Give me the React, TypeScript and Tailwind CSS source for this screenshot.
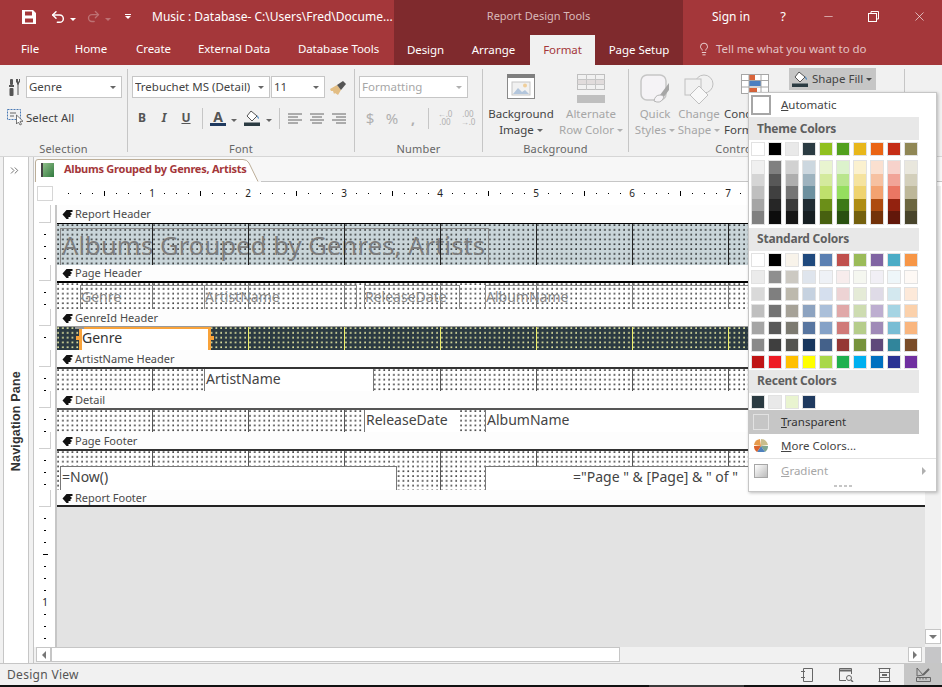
import React from "react";
import { Undo2, Redo2, X, Minus, Lightbulb, ChevronsRight } from "lucide-react";

const GRID = [95, 191, 287, 383, 479, 575, 671, 767, 863];
const DOTS_DARK = "bg-[radial-gradient(circle_at_1px_1px,#000_0.55px,transparent_0.85px)] bg-[length:4.8px_4.8px]";
const DOTS_YELLOW = "bg-[radial-gradient(circle_at_1px_1px,#ffffb0_0.6px,transparent_0.85px)] bg-[length:4.8px_4.8px]";

const THEME = ["#ffffff", "#000000", "#e9e9e9", "#2b3b42", "#90c01f", "#52a01e", "#e8b71b", "#ea6414", "#c52d16", "#908755"];
const SHADES = [
  ["#f0f0f0", "#d5d5d5", "#bfbfbf", "#a5a5a5", "#808080"],
  ["#808080", "#585858", "#404040", "#262626", "#0d0d0d"],
  ["#d1d1d1", "#aeaeae", "#757575", "#3a3a3a", "#171717"],
  ["#ccd7df", "#9eb3bf", "#6d909f", "#212d34", "#161e22"],
  ["#e9f4d0", "#d4ea9d", "#bfe06c", "#6b8f18", "#476010"],
  ["#dcf2cc", "#b9e58d", "#95de5f", "#3d7917", "#295010"],
  ["#fbf1cf", "#f5e39f", "#efd36f", "#ae8c13", "#74600d"],
  ["#fae0d0", "#f6c1a1", "#f3a270", "#ad4b10", "#73320a"],
  ["#f7d2cb", "#f1a498", "#ea7663", "#93220f", "#62170a"],
  ["#e9e7dd", "#d3cfbb", "#bdb799", "#6c6640", "#48442b"],
];
const STANDARD = [
  ["#ffffff", "#000000", "#f8f3ea", "#1f497d", "#5b80b2", "#c0504d", "#9bbb59", "#8064a2", "#4bacc6", "#f79646"],
  ["#ebebeb", "#8f8f8f", "#ccc9c2", "#dfe5ed", "#eef1f6", "#f7ecec", "#f5f7f0", "#f1eff5", "#eef6f9", "#fef9f5"],
  ["#d9d9d9", "#7f7f7f", "#bdb9ad", "#c6d2e0", "#d5dfee", "#edd3d4", "#e5ebd7", "#dfdbe7", "#d3e8ef", "#fde9d9"],
  ["#bfbfbf", "#737373", "#a6a298", "#8da3c0", "#aabfd9", "#e0a8a8", "#cedcb1", "#bdaed0", "#a5d4e3", "#fbd1ab"],
  ["#a5a5a5", "#595959", "#7c7a71", "#5876a0", "#85a2c7", "#d07a78", "#b6cd8b", "#9f8ab7", "#79bdd4", "#f9b67f"],
  ["#8a8a8a", "#3f3f3f", "#545450", "#17365d", "#44618a", "#953735", "#76923c", "#5f497a", "#31859b", "#7a4c28"],
  ["#bf1515", "#ee1c25", "#ffc000", "#ffff00", "#a9d84a", "#1eb04f", "#00b0f0", "#0070c0", "#2a3293", "#7030a0"],
];
const RECENT = ["#2b3b42", "#e9e9e9", "#e9f4d0", "#1f3a5f"];

function Swatch({ c }: { c: string }) {
  return <div className="w-[12px] h-[12px] border border-[#e2e2e2] box-content shrink-0" style={{ backgroundColor: c }} />;
}
function SwatchRow({ colors }: { colors: string[] }) {
  return (
    <div className="flex gap-[3px] pl-[2px]">
      {colors.map((c, i) => <Swatch key={i} c={c} />)}
    </div>
  );
}
function MenuHead({ children }: { children: React.ReactNode }) {
  return (
    <div className="h-[23px] w-[170px] bg-[#e8e8e8] flex items-center pl-[8px] text-[12px] font-bold text-[#5f5f5f] tracking-[-0.2px]">
      {children}
    </div>
  );
}
function ShapeMenu() {
  return (
    <div className="absolute left-[748px] top-[92px] w-[189px] h-[400px] bg-white border border-[#c6c6c6] shadow-[1px_1px_3px_rgba(0,0,0,0.25)] z-20 flex flex-col text-[#444]">
      <div className="h-[24px] flex items-center pl-[2px] shrink-0">
        <div className="w-[20px] h-[20px] border-2 border-[#a6a6a6] bg-white" />
        <span className="ml-[10px] text-[11.5px]"><u>A</u>utomatic</span>
      </div>
      <MenuHead>Theme Colors</MenuHead>
      <div className="mt-[2px]"><SwatchRow colors={THEME} /></div>
      <div className="flex gap-[3px] pl-[2px] mt-[4px]">
        {SHADES.map((col, i) => (
          <div key={i} className="w-[12px] box-content border border-[#e2e2e2] flex flex-col shrink-0">
            {col.map((c, j) => <div key={j} className="h-[12.6px]" style={{ backgroundColor: c }} />)}
          </div>
        ))}
      </div>
      <div className="mt-[3px]"><MenuHead>Standard Colors</MenuHead></div>
      <div className="mt-[2px] flex flex-col gap-[3px]">
        {STANDARD.map((r, i) => <SwatchRow key={i} colors={r} />)}
      </div>
      <div className="mt-[1px]"><MenuHead>Recent Colors</MenuHead></div>
      <div className="mt-[2px]"><SwatchRow colors={RECENT} /></div>
      <div className="mt-[1px] h-[24px] w-[170px] bg-[#c6c6c6] flex items-center pl-[4px] shrink-0">
        <div className="w-[16px] h-[16px] border border-[#e2e2e2]" />
        <span className="ml-[12px] text-[11.5px] text-[#333]"><u>T</u>ransparent</span>
      </div>
      <div className="h-[24px] flex items-center pl-[4px] shrink-0">
        <svg width="16" height="16" viewBox="0 0 16 16">
          <path d="M8 8L8 1A7 7 0 0 1 15 7Z" fill="#c9bd8a" />
          <path d="M8 8L15 8A7 7 0 0 1 12 14Z" fill="#7da58f" />
          <path d="M8 8L12 14L4 14Z" fill="#4f81bd" />
          <path d="M8 8L4 14A7 7 0 0 1 1 8Z" fill="#d9622b" />
          <path d="M8 8L1 7A7 7 0 0 1 7 1Z" fill="#e69a4a" />
        </svg>
        <span className="ml-[12px] text-[11.5px]"><u>M</u>ore Colors...</span>
      </div>
      <div className="h-px bg-[#e2e2e2] shrink-0" />
      <div className="h-[24px] flex items-center pl-[5px] relative shrink-0">
        <div className="w-[14px] h-[14px] border border-[#a6a6a6] bg-gradient-to-br from-white to-[#bbbbbb]" />
        <span className="ml-[13px] text-[11.5px] text-[#a6a6a6]"><u>G</u>radient</span>
        <div className="ml-auto mr-[10px] w-0 h-0 border-y-[4px] border-y-transparent border-l-[4px] border-l-[#b0b0b0]" />
      </div>
      <div className="flex justify-center gap-[2px] mt-[2px]">
        {[0, 1, 2, 3].map((i) => <div key={i} className="w-[3px] h-[2px] bg-[#c6c6c6]" />)}
      </div>
    </div>
  );
}

function Caret({ c = "#666" }: { c?: string }) {
  return <span className="inline-block w-0 h-0 border-x-[3px] border-x-transparent border-t-[3px]" style={{ borderTopColor: c }} />;
}
function Dropdown({ w, text, disabled }: { w: string; text: string; disabled?: boolean }) {
  return (
    <div className={`${w} h-[22px] bg-white border border-[#c6c6c6] flex items-center justify-between pl-[2px] pr-[5px] text-[11.5px] ${disabled ? "text-[#a6a6a6]" : "text-[#444]"}`}>
      <span className="truncate">{text}</span>
      <Caret c={disabled ? "#b0b0b0" : "#666"} />
    </div>
  );
}
function Sep() {
  return <div className="w-px my-[4px] bg-[#c6c6c6] shrink-0" />;
}
function GroupLabel({ children }: { children: React.ReactNode }) {
  return <div className="h-[14px] text-center text-[11px] leading-[14px] text-[#666] tracking-[0.2px] shrink-0 whitespace-nowrap">{children}</div>;
}
function Tools() {
  return (
    <svg width="12" height="17" viewBox="0 0 12 17" fill="#555">
      <rect x="1" y="0" width="3" height="6" rx="1" />
      <rect x="0" y="6" width="5" height="2" />
      <rect x="0.5" y="9" width="4" height="8" rx="1" />
      <path d="M7 0v3l1 1v1l.5 1v10h1V6l.5-1V4l1-1V0h-1v2.5h-1V0h-1v2.5H8V0z" />
    </svg>
  );
}
function SelectAllIcon() {
  return (
    <svg width="17" height="17" viewBox="0 0 17 17" fill="none">
      <rect x="0.5" y="0.5" width="13" height="10" stroke="#4a7ab5" strokeDasharray="2 1" />
      <path d="M3 4h6M3 7h4" stroke="#666" />
      <path d="M9.5 6v9l2-2 1.5 3 1.5-.7-1.5-3h3z" fill="#fff" stroke="#555" strokeWidth="0.8" />
    </svg>
  );
}
function Painter() {
  return (
    <svg width="17" height="15" viewBox="0 0 17 15">
      <path d="M0 9l7-4 4 5-3 5-3-2-1 1-1-3-2 0z" fill="#e2bd83" />
      <path d="M7 5l6-4 3 3-5 6z" fill="#555" />
    </svg>
  );
}
function FillBucket({ bar }: { bar: string }) {
  return (
    <svg width="17" height="16" viewBox="0 0 17 16">
      <path d="M7 1l6 5-5 5-5-5z" fill="#fff" stroke="#555" />
      <path d="M13 5q2 2 2 4-2-1-2-4z" fill="#2e75b6" />
      <rect x="0" y="12.5" width="16" height="3.5" fill={bar} />
    </svg>
  );
}
function AlignIcon({ kind }: { kind: "l" | "c" | "r" }) {
  const rows: [number, number][] =
    kind === "l" ? [[0, 14], [0, 10], [0, 14], [0, 10]] : kind === "c" ? [[0, 14], [2, 12], [0, 14], [2, 12]] : [[0, 14], [4, 14], [0, 14], [4, 14]];
  return (
    <svg width="14" height="11" viewBox="0 0 14 11">
      {rows.map(([a, b], i) => <path key={i} d={`M${a} ${i * 3 + 1}H${b}`} stroke="#666" />)}
    </svg>
  );
}
function BgImageIcon() {
  return (
    <svg width="28" height="25" viewBox="0 0 28 25">
      <rect x="0.5" y="0.5" width="27" height="24" fill="#fff" stroke="#8a8a8a" />
      <rect x="0" y="0" width="28" height="4" fill="#7f7f7f" />
      <rect x="5" y="8" width="18" height="13" fill="#f1f1f1" stroke="#c6c6c6" />
      <path d="M6 20l5-6 4 4 3-2 4 4z" fill="#b3c6dc" />
      <circle cx="18" cy="11.5" r="2" fill="#f0cf9b" />
    </svg>
  );
}
function AltRowIcon() {
  return (
    <svg width="30" height="29" viewBox="0 0 30 29">
      <rect x="1.5" y="0.5" width="27" height="15" fill="#f1f1f1" stroke="#bfbfbf" />
      <rect x="2" y="5.5" width="26" height="5" fill="#e1dcdc" />
      <path d="M1 5.5H29M1 10.5H29M10.5 0V16M19.5 0V16" stroke="#c6c6c6" />
      <rect x="1" y="21" width="28" height="8" fill="#bfbfbf" />
    </svg>
  );
}
function QuickIcon() {
  return (
    <svg width="30" height="30" viewBox="0 0 30 30">
      <rect x="1" y="1" width="25" height="25" rx="6" fill="#f5f3f6" stroke="#c6c6c6" strokeWidth="1.5" />
      <path d="M29 9L20 21l3 3 6-8z" fill="#a6a6a6" />
      <path d="M14 27q1-6 6-6t3 4q-3 5-9 2z" fill="#f5f3f6" stroke="#b5b5b5" />
    </svg>
  );
}
function ChangeIcon() {
  return (
    <svg width="30" height="30" viewBox="0 0 30 30" fill="#f1f1f1" stroke="#c0c0c0">
      <circle cx="20" cy="10" r="9" />
      <rect x="1" y="5" width="16" height="16" />
      <path d="M15 12l9 9-9 9-9-9z" fill="#f8f8f8" />
    </svg>
  );
}
function CondIcon() {
  return (
    <svg width="29" height="20" viewBox="0 0 29 20">
      <rect x="0.5" y="0.5" width="27" height="19" fill="#fff" stroke="#a6a6a6" />
      <rect x="8" y="1" width="6" height="5" fill="#d9643a" />
      <rect x="8" y="7" width="12" height="5" fill="#4a7fc0" />
      <rect x="8" y="14" width="8" height="5" fill="#d9643a" />
      <path d="M8 0V20M20 0V20M0 6.5H28M0 13H28" stroke="#a6a6a6" />
    </svg>
  );
}
function TwoLine({ a, b, icon, w, dim }: { a: string; b: string; icon: React.ReactNode; w: string; dim?: boolean }) {
  return (
    <div className={`${w} flex flex-col items-center text-[11.5px] leading-[16px] whitespace-nowrap ${dim ? "text-[#a6a6a6]" : "text-[#444]"}`}>
      <div className="h-[31px] flex items-start">{icon}</div>
      <div className="mt-[1px]">{a}</div>
      <div className="flex items-center gap-[3px]">{b}<Caret c={dim ? "#b0b0b0" : "#666"} /></div>
    </div>
  );
}

function Ribbon() {
  return (
    <div className="h-[92px] bg-[#f1f1f1] border-b border-[#d6d6d6] flex shrink-0 text-[#444]">
      <div className="w-[127px] flex flex-col">
        <div className="flex-1 pt-[11px]">
          <div className="flex items-center pl-[9px] gap-[5px]">
            <Tools />
            <Dropdown w="w-[96px]" text="Genre" />
          </div>
          <div className="flex items-center pl-[7px] mt-[11px] gap-[2px] text-[11.5px]">
            <SelectAllIcon />
            Select All
          </div>
        </div>
        <GroupLabel>Selection</GroupLabel>
      </div>
      <Sep />
      <div className="w-[226px] flex flex-col">
        <div className="flex-1 pt-[11px] pl-[4px]">
          <div className="flex items-center gap-px">
            <Dropdown w="w-[138px]" text="Trebuchet MS (Detail)" />
            <Dropdown w="w-[54px]" text="11" />
            <div className="ml-[4px]"><Painter /></div>
          </div>
          <div className="flex items-center h-[22px] mt-[9px] text-[12px] text-[#555]">
            <div className="w-[22px] ml-[-1px] text-center font-bold">B</div>
            <div className="w-[22px] text-center italic font-bold">I</div>
            <div className="w-[22px] text-center underline font-bold">U</div>
            <div className="w-px h-[21px] bg-[#c6c6c6] ml-[5px]" />
            <div className="ml-[7px] w-[16px] flex flex-col items-center leading-[12px] font-bold text-[14px] text-[#555]">
              A
              <div className="w-[16px] h-[3px] bg-[#1f3a5f]" />
            </div>
            <div className="ml-[5px]"><Caret /></div>
            <div className="ml-[7px]"><FillBucket bar="#2b3b42" /></div>
            <div className="ml-[5px]"><Caret /></div>
            <div className="w-px h-[21px] bg-[#c6c6c6] ml-[7px]" />
            <div className="ml-[8px] flex gap-[8px]">
              <AlignIcon kind="l" />
              <AlignIcon kind="c" />
              <AlignIcon kind="r" />
            </div>
          </div>
        </div>
        <GroupLabel>Font</GroupLabel>
      </div>
      <Sep />
      <div className="w-[127px] flex flex-col">
        <div className="flex-1 pt-[11px] pl-[4px]">
          <Dropdown w="w-[109px]" text="Formatting" disabled />
          <div className="flex items-center h-[22px] mt-[9px] text-[#b0b0b0]">
            <div className="w-[22px] text-center text-[15px]">$</div>
            <div className="w-[22px] text-center text-[15px]">%</div>
            <div className="w-[20px] text-center text-[14px] font-bold">,</div>
            <div className="w-px h-[21px] bg-[#c6c6c6] ml-[5px]" />
            <div className="ml-[6px] text-[8px] leading-[8px] w-[20px] text-center">←.0<br />.00</div>
            <div className="ml-[3px] text-[8px] leading-[8px] w-[20px] text-center">.00<br />→.0</div>
          </div>
        </div>
        <GroupLabel>Number</GroupLabel>
      </div>
      <Sep />
      <div className="w-[145px] flex flex-col">
        <div className="flex-1 pt-[9px] pl-[1px] flex">
          <TwoLine w="w-[74px]" a="Background" b="Image" icon={<BgImageIcon />} />
          <TwoLine w="w-[66px]" a="Alternate" b="Row Color" dim icon={<AltRowIcon />} />
        </div>
        <GroupLabel>Background</GroupLabel>
      </div>
      <Sep />
      <div className="w-[275px] flex flex-col">
        <div className="flex-1 pt-[7px] pl-[4px] flex">
          <div className="mt-[2px] flex">
            <TwoLine w="w-[44px]" a="Quick" b="Styles" dim icon={<QuickIcon />} />
            <TwoLine w="w-[44px]" a="Change" b="Shape" dim icon={<ChangeIcon />} />
          </div>
          <div className="mt-[2px] flex flex-col pl-[3px] text-[11.5px] leading-[16px]">
            <div className="h-[31px] pl-[17px]"><CondIcon /></div>
            <div className="mt-[1px]">Conditional</div>
            <div>Formatting</div>
          </div>
          <div className="ml-auto mr-[28px] mt-[-4px] w-[87px] h-[22px] bg-[#c6c6c6] flex items-center pl-[3px] gap-[3px] text-[11.5px]">
            <FillBucket bar="#2b3b42" />
            Shape Fill
            <Caret c="#444" />
          </div>
        </div>
        <GroupLabel>Control Formatting</GroupLabel>
      </div>
      <Sep />
    </div>
  );
}

function Header() {
  return (
    <div className="h-[65px] flex shrink-0 text-white text-[12px]">
      <div className="w-[394px] bg-[#a4373a] flex flex-col">
        <div className="h-[33px] flex items-center">
          <div className="ml-[22px] w-[14px] h-[14px]">
            <svg width="14" height="14" viewBox="0 0 14 14" fill="#fff">
              <path fillRule="evenodd" d="M0 0h11l3 3v11H0zM3 1.5v4h7v-4zM3 8.5V12.5h8V8.5z" />
            </svg>
          </div>
          <Undo2 className="ml-[14px]" size={16} strokeWidth={2.2} />
          <div className="ml-[4px]"><Caret c="#fff" /></div>
          <Redo2 className="ml-[10px] text-[#bd7173]" size={15} strokeWidth={2.2} />
          <div className="ml-[4px]"><Caret c="#bd7173" /></div>
          <div className="ml-[14px] flex flex-col items-center gap-[1px]">
            <div className="w-[6px] h-px bg-white" />
            <Caret c="#fff" />
          </div>
          <div className="ml-[21px]">Music : Database- C:\Users\Fred\Docume...</div>
        </div>
        <div className="flex-1 flex items-center text-[11.5px] tracking-[-0.05px]">
          <div className="w-[60px] text-center">File</div>
          <div className="w-[62px] text-center">Home</div>
          <div className="w-[63px] text-center">Create</div>
          <div className="w-[98px] text-center">External Data</div>
          <div className="w-[111px] text-center">Database Tools</div>
        </div>
      </div>
      <div className="w-[289px] bg-[#7f2a2d] flex flex-col">
        <div className="h-[33px] flex items-center justify-center text-[11px] text-[#d9b9ba]">Report Design Tools</div>
        <div className="mt-[2px] h-[30px] flex text-[11.5px] tracking-[-0.05px]">
          <div className="w-[63px] flex items-center justify-center">Design</div>
          <div className="w-[73px] flex items-center justify-center">Arrange</div>
          <div className="w-[65px] flex items-center justify-center bg-[#f1f1f1] text-[#a4373a]">Format</div>
          <div className="w-[88px] flex items-center justify-center">Page Setup</div>
        </div>
      </div>
      <div className="flex-1 bg-[#a4373a] flex flex-col">
        <div className="h-[33px] flex items-center">
          <div className="ml-[29px]">Sign in</div>
          <div className="ml-[30px] text-[13px]">?</div>
          <Minus className="ml-[36px]" size={13} strokeWidth={1} />
          <svg className="ml-[33px]" width="11" height="11" viewBox="0 0 11 11" fill="none" stroke="#fff">
            <path d="M3 2.5V.5h7.5V8H8.5" />
            <rect x="0.5" y="2.5" width="8" height="8" />
          </svg>
          <X className="ml-[33px]" size={15} strokeWidth={1} />
        </div>
        <div className="flex-1 flex items-center pl-[14px] gap-[5px] text-[11.5px] tracking-[-0.05px] text-[#e3c3c4]">
          <Lightbulb size={14} strokeWidth={1.3} className="text-white" />
          Tell me what you want to do
        </div>
      </div>
    </div>
  );
}

function BandIcon() {
  return (
    <svg width="11" height="9" viewBox="0 0 10 9" fill="#111" className="shrink-0">
      <path d="M0 4.5L4 0h6v2H8v1h1v2H8v2H6v2H4z" />
    </svg>
  );
}
function Band({ label, h }: { label: string; h: string }) {
  return (
    <div className={`${h} flex items-center bg-[#fdfdfd] pl-[5px] pt-px gap-[2px] text-[11px] text-[#4a4a4a]`}>
      <BandIcon />
      {label}
    </div>
  );
}
function Ticks({ n }: { n: number }) {
  return (
    <div className="flex flex-col items-center pt-[11px] pl-px gap-[11px]">
      {Array.from({ length: n }).map((_, i) => <div key={i} className="w-[2px] h-px bg-black" />)}
    </div>
  );
}
function VLines({ c }: { c: string }) {
  return (
    <>
      {GRID.map((x) => <div key={x} className={`absolute top-0 bottom-0 w-px ${c}`} style={{ left: x }} />)}
    </>
  );
}
function Row({ left, children }: { left: React.ReactNode; children: React.ReactNode }) {
  return (
    <div className="flex">
      <div className="w-[19px] ml-[3px] shrink-0 border-r border-[#c6c6c6] pr-[3px] bg-white">{left}</div>
      <div className="w-[1px] shrink-0 bg-[#c6c6c6]" />
      <div className="flex-1 min-w-0">{children}</div>
    </div>
  );
}
function BandBox() {
  return <div className="mx-[2px] h-full border-r border-b border-[#cfcfcf] w-[12px]" />;
}

const REPORT_FONT = "font-['Noto_Sans','Lato',sans-serif]";

function Surface() {
  return (
    <div className="flex-1 min-h-0 flex flex-col">
      <Row left={<BandBox />}><Band label="Report Header" h="h-[18px]" /></Row>
      <Row left={<Ticks n={3} />}>
        <div className={`h-[42px] relative bg-[#c9d5d9] border-t border-black ${DOTS_DARK} overflow-hidden`}>
          <div className="absolute left-[3px] top-[4px] w-[429px] h-[40px] border-t border-x border-[#888]" />
          <div className={`absolute left-[5px] top-[3px] text-[25.75px] leading-[36px] text-[#7d7d7d] whitespace-nowrap ${REPORT_FONT}`}>Albums Grouped by Genres, Artists</div>
          <VLines c="bg-[#222]" />
        </div>
      </Row>
      <Row left={<BandBox />}><Band label="Page Header" h="h-[16px]" /></Row>
      <Row left={<Ticks n={2} />}>
        <div className={`h-[28px] relative bg-white border-t-2 border-black ${DOTS_DARK} overflow-hidden`}>
          <VLines c="bg-[#777]" />
          <div className="absolute left-[23px] top-[2px] w-[277px] h-[30px] border-t border-l border-[#888]" />
          <div className="absolute left-[147px] top-[2px] w-[153px] h-[30px] border-l border-[#888]" />
          <div className="absolute left-[299px] top-[2px] w-px h-[30px] bg-[#888]" />
          <div className="absolute left-[307px] top-[2px] w-[96px] h-[30px] border-t border-x border-[#888]" />
          <div className="absolute left-[428px] top-[2px] w-[500px] h-[30px] border-t border-l border-[#888]" />
          {[["left-[24px]", "Genre"], ["left-[148px]", "ArtistName"], ["left-[308px]", "ReleaseDate"], ["left-[429px]", "AlbumName"]].map(([l, t]) => (
            <div key={t} className={`absolute ${l} top-[4px] text-[14px] leading-[20px] text-[#888] ${REPORT_FONT}`}>{t}</div>
          ))}
        </div>
      </Row>
      <Row left={<BandBox />}><Band label="GenreId Header" h="h-[17px]" /></Row>
      <Row left={<Ticks n={1} />}>
        <div className={`h-[24px] relative bg-[#2b3a42] border-t border-[#999] ${DOTS_YELLOW} overflow-hidden`}>
          <VLines c="bg-[#efef6a]" />
          <div className="absolute left-[22px] top-0 w-[132px] h-[30px] bg-white border-x-[3px] border-t-2 border-[#f9a33a]" />
          <div className="absolute left-[19px] top-[9px] w-[3px] h-[4px] bg-[#f9a33a]" />
          <div className="absolute left-[154px] top-[9px] w-[3px] h-[4px] bg-[#f9a33a]" />
          <div className="absolute left-[18px] top-0 w-[9px] h-[2px] bg-[#999]" />
          <div className={`absolute left-[25px] top-[1px] text-[14px] leading-[20px] text-[#333] ${REPORT_FONT}`}>Genre</div>
        </div>
      </Row>
      <Row left={<BandBox />}><Band label="ArtistName Header" h="h-[17px]" /></Row>
      <Row left={<Ticks n={2} />}>
        <div className={`h-[24px] relative bg-white border-t-2 border-[#333] ${DOTS_DARK} overflow-hidden`}>
          <VLines c="bg-[#555]" />
          <div className="absolute left-[147px] top-0 w-[170px] h-[24px] bg-white border-x border-[#777]" />
          <div className={`absolute left-[149px] top-0 text-[14px] leading-[20px] text-[#444] ${REPORT_FONT}`}>ArtistName</div>
        </div>
      </Row>
      <Row left={<BandBox />}><Band label="Detail" h="h-[17px]" /></Row>
      <Row left={<Ticks n={2} />}>
        <div className={`h-[24px] relative bg-white border-t-2 border-[#555] ${DOTS_DARK} overflow-hidden`}>
          <VLines c="bg-[#555]" />
          <div className="absolute left-[307px] top-0 w-[96px] h-[24px] bg-white border-l border-[#777]" />
          <div className="absolute left-[428px] top-0 w-[500px] h-[24px] bg-white border-l border-[#777]" />
          <div className={`absolute left-[309px] top-0 text-[14px] leading-[20px] text-[#444] ${REPORT_FONT}`}>ReleaseDate</div>
          <div className={`absolute left-[430px] top-0 text-[14px] leading-[20px] text-[#444] ${REPORT_FONT}`}>AlbumName</div>
        </div>
      </Row>
      <Row left={<BandBox />}><Band label="Page Footer" h="h-[17px]" /></Row>
      <Row left={<Ticks n={3} />}>
        <div className={`h-[41px] relative bg-white border-t-2 border-[#333] ${DOTS_DARK} overflow-hidden`}>
          <VLines c="bg-[#555]" />
          <div className="absolute left-[3px] top-[15px] w-[337px] h-[26px] bg-white border-t border-x border-[#777]" />
          <div className="absolute left-[428px] top-[15px] w-[500px] h-[26px] bg-white border-t border-l border-[#777]" />
          <div className={`absolute left-[5px] top-[16px] text-[14px] leading-[20px] text-[#444] ${REPORT_FONT}`}>=Now()</div>
          <div className={`absolute left-[516px] top-[16px] text-[14px] leading-[20px] text-[#444] whitespace-nowrap ${REPORT_FONT}`}>="Page " &amp; [Page] &amp; " of "</div>
        </div>
      </Row>
      <Row left={<BandBox />}><Band label="Report Footer" h="h-[17px] border-b-2 border-[#222]" /></Row>
      <div className="flex-1 min-h-0 flex">
        <div className="w-[19px] ml-[3px] shrink-0 border-r border-[#c6c6c6] pr-[3px] bg-white flex flex-col items-center pl-px pt-[11px] gap-[11px]">
          {Array.from({ length: 11 }).map((_, i) =>
            i === 7 ? (
              <div key={i} className="h-px w-[2px] flex items-center justify-center text-[10px] text-[#222]">1</div>
            ) : (
              <div key={i} className={`${i === 3 ? "w-[5px]" : "w-[2px]"} h-px bg-black`} />
            )
          )}
        </div>
        <div className="w-[1px] shrink-0 bg-[#c6c6c6]" />
        <div className="flex-1 bg-[#e3e3e3]" />
      </div>
    </div>
  );
}

function HRuler() {
  return (
    <div className="h-[15px] flex shrink-0 bg-white">
      <div className="ml-[3px] w-[16px] border border-[#d6d6d6]" />
      <div className="ml-[9px] flex items-center pb-px">
        {Array.from({ length: 70 }).map((_, i) => {
          const k = i + 1;
          return (
            <div key={i} className="w-[12px] shrink-0 flex items-center justify-center text-[10px] leading-[10px] text-[#222]">
              {k % 8 === 0 ? k / 8 : k % 4 === 0 ? <div className="w-px h-[5px] bg-black" /> : <div className="w-[1px] h-[1px] bg-black" />}
            </div>
          );
        })}
      </div>
    </div>
  );
}

function ArrowBtn({ dir, w }: { dir: "l" | "r" | "d"; w: string }) {
  return (
    <div className={`${w} h-[15px] bg-white border border-[#c6c6c6] flex items-center justify-center shrink-0`}>
      {dir === "l" && <div className="w-0 h-0 border-y-[4px] border-y-transparent border-r-[4px] border-r-[#777]" />}
      {dir === "r" && <div className="w-0 h-0 border-y-[4px] border-y-transparent border-l-[4px] border-l-[#777]" />}
      {dir === "d" && <div className="w-0 h-0 border-x-[4px] border-x-transparent border-t-[4px] border-t-[#777]" />}
    </div>
  );
}

function Status() {
  return (
    <div className="h-[22px] bg-[#f1f1f1] border-t border-[#c6c6c6] flex items-stretch shrink-0 text-[12px] text-[#555] tracking-[0.3px]">
      <div className="pl-[7px] flex items-center">Design View</div>
      <div className="ml-auto flex items-center">
        <svg width="14" height="14" viewBox="0 0 14 14" fill="none" stroke="#666">
          <path d="M3.5 .5h9v13h-9zM1 3.5h4M1 9.5h4" />
        </svg>
        <svg className="ml-[25px]" width="15" height="14" viewBox="0 0 15 14" fill="none" stroke="#666">
          <path d="M7 12.5H.5V.5h12V6" />
          <path d="M.5 2.5h12" strokeWidth="2" />
          <circle cx="10" cy="10" r="2.5" />
          <path d="M12 12l2 2" strokeWidth="1.5" />
        </svg>
        <svg className="ml-[24px]" width="13" height="14" viewBox="0 0 13 14" fill="none" stroke="#666">
          <path d="M1.5.5v13M11.5.5v13M.5.5h12M.5 13.5h12M1.5 4.5h10M1.5 9.5h10" />
          <path d="M4 7h5" strokeWidth="2" />
        </svg>
        <div className="ml-[13px] w-[38px] h-full bg-[#c6c6c6] flex items-center justify-center">
          <svg width="15" height="15" viewBox="0 0 15 15" fill="none" stroke="#666">
            <path d="M1 1v8l6-1zM.5 10.5h14v4H.5zM4 10.5v2M7 10.5v2M10 10.5v2" />
            <path d="M7 8l6-6" strokeWidth="2" />
          </svg>
        </div>
      </div>
    </div>
  );
}

export default function App() {
  return (
    <div className="w-[942px] h-[687px] relative overflow-hidden flex flex-col bg-white font-['Noto_Sans','Open_Sans',sans-serif]">
      <Header />
      <Ribbon />
      <div className="flex-1 min-h-0 flex">
        <div className="w-[34px] shrink-0 bg-[#f1f1f1] pl-[3px] border-r border-[#c6c6c6]">
          <div className="w-[26px] h-full bg-white border-x border-[#c6c6c6] flex flex-col items-center">
            <ChevronsRight size={13} strokeWidth={1.5} className="text-[#555] mt-[7px] mr-[4px]" />
            <div className="mt-[194px] [writing-mode:vertical-rl] rotate-180 font-['Liberation_Sans',sans-serif] font-bold text-[12.5px] text-[#333] tracking-[0.2px]">Navigation Pane</div>
          </div>
        </div>
        <div className="flex-1 min-w-0 flex flex-col">
          <div className="h-[29px] shrink-0 flex flex-col">
            <div className="h-[25px] flex bg-[#f7f7f7]">
              <div className="relative w-[226px] h-[23px] ml-px mt-[2px]">
                <svg className="absolute inset-0" width="226" height="23" viewBox="0 0 226 23" fill="#fff" stroke="#bcae98">
                  <path d="M0.5 23V3Q.5 .5 3 .5H208Q212 .5 214 4L223 22.5" />
                </svg>
                <div className="relative flex items-center h-[21px] pl-[6px]">
                  <div className="w-[13px] h-[14px] bg-gradient-to-br from-[#8fbf8a] to-[#2f7a3f] border-l-2 border-[#444]" />
                  <div className="ml-[10px] text-[11px] font-bold text-[#a4373a] tracking-[-0.25px]">Albums Grouped by Genres, Artists</div>
                </div>
              </div>
              <div className="flex-1 border-b border-[#c6c6c6]" />
            </div>
            <div className="flex-1 bg-white" />
          </div>
          <div className="flex-1 min-h-0 flex">
            <div className="flex-1 min-w-0 flex flex-col bg-white">
              <HRuler />
              <div className="h-[4px] shrink-0 bg-white" />
              <Surface />
              <div className="h-[16px] flex shrink-0 bg-[#f1f1f1] pl-[2px]">
                <ArrowBtn dir="l" w="w-[15px]" />
                <div className="w-[569px] h-[15px] bg-white border border-[#c6c6c6]" />
                <div className="ml-auto mr-[3px]"><ArrowBtn dir="r" w="w-[14px]" /></div>
              </div>
            </div>
            <div className="w-[17px] shrink-0 flex flex-col bg-[#f1f1f1] border-r border-white">
              <div className="flex-1" />
              <ArrowBtn dir="d" w="w-full" />
              <div className="h-[3px]" />
              <div className="h-[16px] bg-[#c6c6c8]" />
            </div>
          </div>
        </div>
      </div>
      <Status />
      <div className="h-[2px] bg-[#111] shrink-0 flex">
        <div className="ml-[649px] w-[95px] bg-[#3a3a3a]" />
      </div>
      <ShapeMenu />
    </div>
  );
}
